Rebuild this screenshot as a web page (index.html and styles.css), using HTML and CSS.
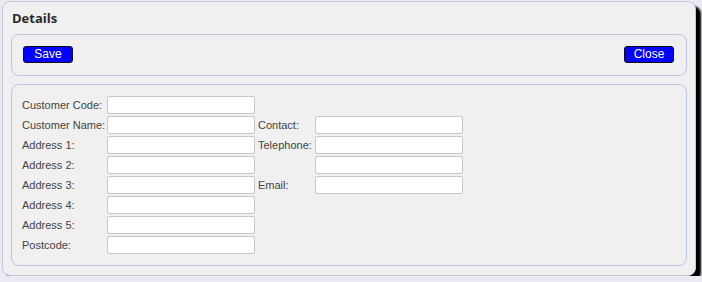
FILE: index.html
```html
<!DOCTYPE html>
<html lang="en">
<head>
    <title>Details</title>
    <meta charset="utf-8">
    <link rel="stylesheet" href="styles.css">
</head>
<body>

    <!-- Hovedpanel -->
    <div class="panel">
        <h1 class="panel-title">Details</h1>

        <!-- Knapper -->
        <div class="box box-buttons">
            <button class="btn">Save</button>
            <button class="btn">Close</button>
        </div>

        <!-- Skjema -->
        <div class="box box-form">
            <label class="lbl">Customer Code:</label>
            <input class="field" type="text">
            <span></span><span></span>

            <label class="lbl">Customer Name:</label>
            <input class="field" type="text">
            <label class="lbl lbl-right">Contact:</label>
            <input class="field" type="text">

            <label class="lbl">Address 1:</label>
            <input class="field" type="text">
            <label class="lbl lbl-right">Telephone:</label>
            <input class="field" type="text">

            <label class="lbl">Address 2:</label>
            <input class="field" type="text">
            <span></span>
            <input class="field" type="text">

            <label class="lbl">Address 3:</label>
            <input class="field" type="text">
            <label class="lbl lbl-right">Email:</label>
            <input class="field" type="text">

            <label class="lbl">Address 4:</label>
            <input class="field" type="text">
            <span></span><span></span>

            <label class="lbl">Address 5:</label>
            <input class="field" type="text">
            <span></span><span></span>

            <label class="lbl">Postcode:</label>
            <input class="field" type="text">
            <span></span><span></span>
        </div>
    </div>

</body>
</html>
```

FILE: styles.css
```css
body{ /* bakgrunn */
    margin: 0;
    background-color: #ebebf4;
    font-family: "Liberation Sans", Arial, sans-serif;
}

.panel{ /* hovedboksen med skygge */
    margin: 1px 0 0 2px;
    width: 676px;
    padding: 7px 8px 9px 8px;
    background-color: #f0f0f0;
    border: 1px solid #c8c8d6;
    border-radius: 8px;
    box-shadow: 5px 5px 2px #000;
}

.panel-title{ /* tittel "Details" */
    margin: 0 0 7px 1px;
    font-family: "Open Sans", "DejaVu Sans", sans-serif;
    font-size: 13px;
    font-weight: bold;
    line-height: 18px;
    color: #2a2a2a;
}

.box{ /* de to boksene */
    border: 1px solid #b9c9e2;
    border-radius: 8px;
}

.box-buttons{ /* knapperaden */
    display: flex;
    justify-content: space-between;
    padding: 11px 12px 12px 11px;
}

.btn{ /* blå knapper */
    height: 17px;
    width: 50px;
    padding: 0;
    background-color: #0000ff;
    color: #fff;
    border: 1px solid #111;
    border-radius: 3px;
    font-family: "Liberation Sans", Arial, sans-serif;
    font-size: 12px;
    line-height: 15px;
}

.box-form{ /* skjemaet */
    margin-top: 8px;
    display: grid;
    grid-template-columns: 85px 148px 60px 148px;
    grid-auto-rows: 18px;
    row-gap: 2px;
    padding: 11px 10px 11px 10px;
}

.lbl{ /* ledetekster */
    font-size: 11px;
    line-height: 18px;
    white-space: nowrap;
    color: #444;
}

.lbl-right{ /* ledetekster i høyre kolonne */
    padding-left: 3px;
}

.field{ /* tekstfelt */
    box-sizing: border-box;
    width: 148px;
    height: 18px;
    margin: 0;
    padding: 0 2px;
    background-color: #fff;
    border: 1px solid #c8c8c8;
    border-radius: 2px;
}
```
